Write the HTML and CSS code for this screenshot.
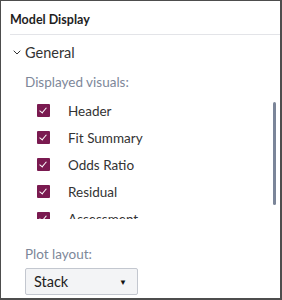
FILE: index.html
```html
<!DOCTYPE html>
<html lang="en">
<head>
    <meta charset="UTF-8">
    <meta name="viewport" content="width=device-width, initial-scale=1.0">
    <title>Model Display</title>
    <link rel="stylesheet" href="styles.css">
</head>
<body>

<div id="panel">
    <div class="panel-title">Model Display</div>

    <div class="section-head">
        <svg class="chevron" width="8" height="5" viewBox="0 0 8 5">
            <path d="M0.7 0.7 L4 4 L7.3 0.7" fill="none" stroke="#333" stroke-width="1"/>
        </svg>
        <span>General</span>
    </div>

    <div class="field-label">Displayed visuals:</div>

    <div class="visuals">
        <div class="visual-list">
            <label class="visual"><span class="check"></span>Header</label>
            <label class="visual"><span class="check"></span>Fit Summary</label>
            <label class="visual"><span class="check"></span>Odds Ratio</label>
            <label class="visual"><span class="check"></span>Residual</label>
            <label class="visual"><span class="check"></span>Assessment</label>
        </div>
        <div class="scroll-thumb"></div>
    </div>

    <div class="field-label plot-label">Plot layout:</div>
    <div class="dropdown">
        <span>Stack</span>
        <span class="arrow">&#9660;</span>
    </div>
</div>

</body>
</html>
```

FILE: styles.css
```css
body {
    margin: 0;
    background-color: white;
    font-family: Lato, "Open Sans", sans-serif;
}

#panel {
    box-sizing: border-box;
    width: 282px;
    height: 300px;
    border-style: solid;
    border-color: #4d4d4d;
    border-width: 1px 2px 2px 1px;
    overflow: hidden;
}

.panel-title {
    margin-left: 9px;
    height: 33px;
    line-height: 38px;
    font-size: 12.5px;
    font-weight: bold;
    color: #1e1e1e;
    border-bottom: 1px solid #e3e4e8;
}

.section-head {
    display: flex;
    align-items: center;
    height: 34px;
    padding-left: 12px;
    font-size: 14.5px;
    color: #333;
}

.chevron {
    margin-right: 4px;
    margin-top: 1px;
}

.field-label {
    padding-left: 24px;
    font-size: 13.5px;
    color: #7d8799;
    height: 26px;
    line-height: 26px;
}

.visuals {
    position: relative;
    height: 122px;
    margin-top: 2px;
    overflow: hidden;
}

.visual {
    display: flex;
    align-items: center;
    height: 27px;
    padding-left: 36px;
    font-size: 13.5px;
    color: #333;
}

.check {
    position: relative;
    width: 13px;
    height: 13px;
    margin-right: 18px;
    border-radius: 1px;
    background-color: #7a1a50;
}

.check::after {
    content: "";
    position: absolute;
    left: 4px;
    top: 2px;
    width: 3px;
    height: 6px;
    border: solid white;
    border-width: 0 1.5px 1.5px 0;
    transform: rotate(40deg);
}

/* overlay scroll indicator */
.scroll-thumb {
    position: absolute;
    right: 4px;
    top: 5px;
    width: 3px;
    height: 103px;
    border-radius: 2px;
    background-color: #7b8599;
}

.plot-label {
    margin-top: 22px;
}

.dropdown {
    display: flex;
    align-items: center;
    justify-content: space-between;
    box-sizing: border-box;
    width: 113px;
    height: 27px;
    margin: 1px 0 0 24px;
    padding: 0 10px 0 8px;
    background-color: #f3f4f6;
    border: 1px solid #c3c7cf;
    border-radius: 2px;
    font-size: 14.5px;
    color: #222;
}

.arrow {
    font-size: 8px;
    color: #111;
}
```
